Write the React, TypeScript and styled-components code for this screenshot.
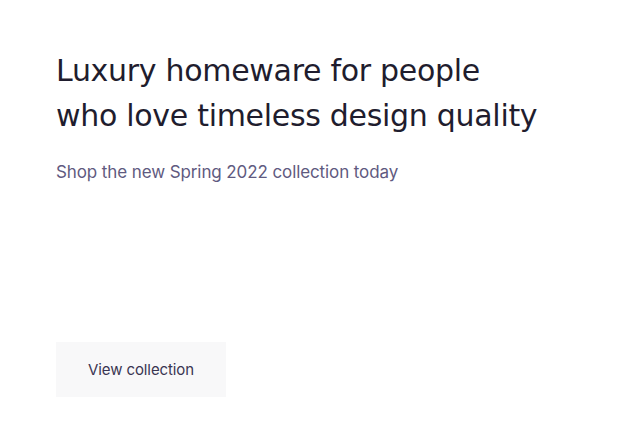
import React from "react";
import styled, { createGlobalStyle } from "styled-components";

const Global = createGlobalStyle`
  html, body { margin: 0; padding: 0; background: #ffffff; }
  * { box-sizing: border-box; }
`;

const Hero = styled.section`
  display: flex;
  flex-direction: column;
  align-items: flex-start;
  padding: 48px 56px 0 56px;
  width: 630px;
  height: 444px;
`;

const Heading = styled.h1`
  margin: 0;
  font-family: "DejaVu Sans", sans-serif;
  font-weight: 400;
  font-size: 30px;
  line-height: 45px;
  letter-spacing: -0.3px;
  color: #1f1d2e;
  max-width: 520px;
`;

const Subtitle = styled.p`
  margin: 22px 0 0 0;
  font-family: Inter, sans-serif;
  font-size: 17px;
  line-height: 24px;
  letter-spacing: -0.1px;
  color: #5f5a80;
`;

const Button = styled.button`
  margin-top: 158px;
  width: 170px;
  height: 55px;
  border: none;
  background: #f8f8f9;
  font-family: Inter, sans-serif;
  font-size: 15px;
  letter-spacing: -0.1px;
  color: #3a3552;
  cursor: pointer;
`;

export default function App() {
  return (
    <>
      <Global />
      <Hero>
        <Heading>
          Luxury homeware for people
          <br />
          who love timeless design quality
        </Heading>
        <Subtitle>Shop the new Spring 2022 collection today</Subtitle>
        <Button>View collection</Button>
      </Hero>
    </>
  );
}
